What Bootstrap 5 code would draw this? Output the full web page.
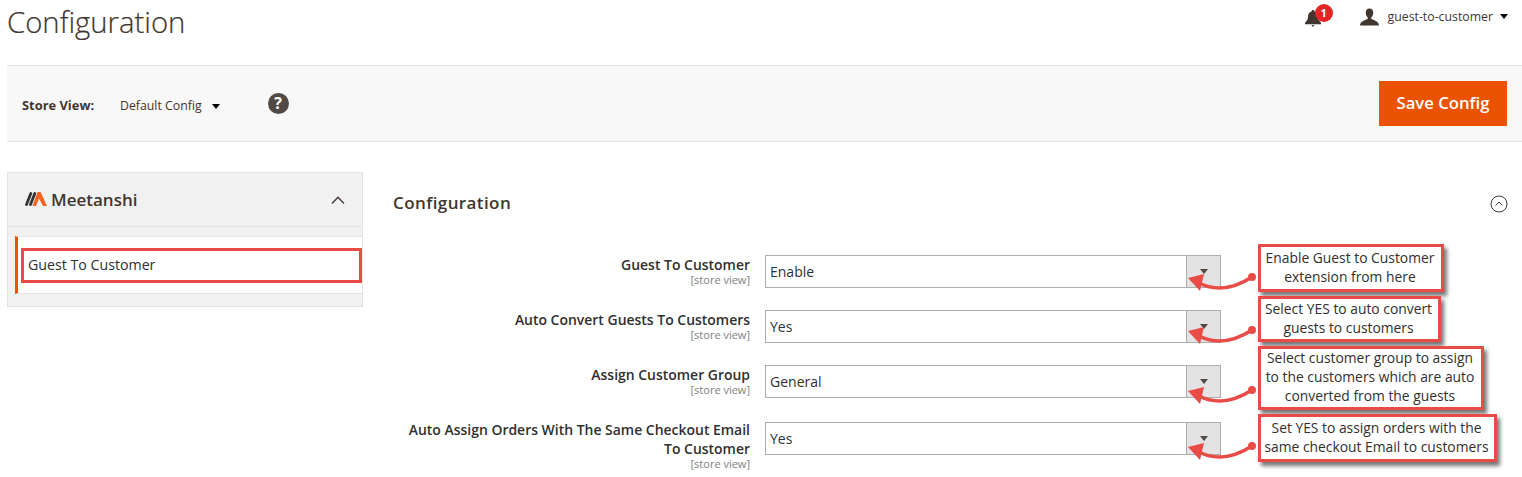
<!DOCTYPE html>
<html lang="en">
<head>
<meta charset="utf-8">
<title>Configuration</title>
<link href="https://cdn.jsdelivr.net/npm/bootstrap@5.3.0/dist/css/bootstrap.min.css" rel="stylesheet">
<style>
html,body{height:477px;overflow:hidden}
body{font-family:"Open Sans",sans-serif;color:#303030;font-size:14px;background:#fff;line-height:1.4}
.top-bar{height:65px;padding:0 14px 0 7px}
.page-name{font-size:29.3px;font-weight:300;color:#41362f;line-height:1;margin:8px 0 0;-webkit-text-stroke:.2px #41362f}
.bell-wrap{position:relative;width:20px;height:20px;margin:8px 35px 0 0}
.bell-count{position:absolute;left:10px;top:-4px;width:18px;height:18px;border-radius:50%;background:#e22626;color:#fff;font-size:11px;font-weight:700;line-height:18px;text-align:center}
.bell-shape{display:block;margin-top:2px}
.user-group{height:17px;margin-top:8px}
.user-name{font-size:12.3px;color:#41362f;margin:0 7px 0 9px}
.tri{display:inline-block;width:0;height:0;border-left:4px solid transparent;border-right:4px solid transparent;border-top:5px solid #000}
.tool-bar{height:77px;margin-left:7px;background:#f8f8f8;border-top:1px solid #e3e3e3;border-bottom:1px solid #e3e3e3;padding:0 15px}
.scope-row{margin-top:4px}
.scope-label{font-size:12.9px;font-weight:700;color:#41362f;width:98px}
.scope-val{font-size:12.3px;color:#41362f;margin:1px 10px 0 0}
.scope-tri{margin-top:3px}
.help-dot{width:21px;height:21px;border-radius:50%;background:#514943;color:#fff;font-size:16px;font-weight:700;line-height:21px;text-align:center;margin-left:48px;margin-top:-3px}
.save-btn{width:128px;height:45px;background:#eb5202;border:0;border-radius:0;color:#fff;font-size:16.7px;font-weight:600;padding:0;margin-top:-1px}
.save-btn:hover{background:#eb5202;color:#fff}
.work-area{position:relative;padding:30px 14px 0 7px}
.side-col{width:356px;flex:none}
.side-box{border:1px solid #e3e3e3;background:#f1f1f1}
.side-head{height:54px;border-bottom:1px solid #e3e3e3;padding:0 17px}
.brand-name{font-size:17px;font-weight:600;color:#41362f;margin-left:4px}
.side-item{margin:9px 0 12px 7px;height:58px;background:#fff;border-left:3px solid #eb5202;border-top:1px solid #e3e3e3;border-bottom:1px solid #e3e3e3;padding:11px 0 0 3px}
.item-mark{border:3px solid #e94b47;height:35px;padding:0 4px;line-height:28px;font-size:14.2px;font-weight:500;color:#303030}
.main-col{flex:1;padding-left:30px}
.sect-head{height:83px;padding:0 0 21px}
.sect-name{font-size:17px;font-weight:600;color:#41362f;letter-spacing:.4px;margin:0}
.sect-toggle{margin-top:2px}
.field-row{display:flex}
.field-label{width:357px;text-align:right;font-weight:600;font-size:13.96px;color:#303030;line-height:19px}
.label-raised{margin-top:-2px}
.field-note{display:block;font-size:11px;font-weight:400;color:#808080;line-height:12px}
.pick-wrap{width:456px;height:33px;margin-left:15px;display:flex;border:1px solid #adadad;background:#fff}
.pick-wrap select{flex:1;border:0;background:transparent;appearance:none;font:14px "Open Sans",sans-serif;color:#303030;padding:0 4px;outline:0}
.pick-arrow{width:34px;background:#e3e3e3;border-left:1px solid #adadad;display:flex;align-items:center;justify-content:center}
.pick-arrow i{width:0;height:0;border-left:4px solid transparent;border-right:4px solid transparent;border-top:5px solid #514943}
.note-box{position:absolute;left:1258px;background:#fff;border:3px solid #e94b47;box-shadow:3px 4px 4px #777;text-align:center;font-size:13.85px;line-height:19px;color:#303030;display:flex;align-items:center;justify-content:center;white-space:nowrap;padding:0 2px 2px 0}
.note-tall{padding-bottom:4px}
.pointer{position:absolute;left:1185px;width:75px;height:24px;overflow:visible}
</style>
</head>
<body>
<div class="top-bar d-flex justify-content-between">
  <h1 class="page-name">Configuration</h1>
  <div class="d-flex align-items-start">
    <div class="bell-wrap">
      <svg class="bell-shape" width="16" height="17" viewBox="0 0 16 18" preserveAspectRatio="none"><path fill="#41362f" d="M8 0c1 0 1.500.7 1.500 1.500C12 2.300 13 4.500 13 7c0 3 1 4.500 3 6.500V15H0v-1.500C2 11.500 3 10 3 7c0-2.500 1-4.700 3.500-5.500C6.500.7 7 0 8 0z"/><path fill="#41362f" d="M6.500 16h3L8 18z"/></svg>
      <span class="bell-count">1</span>
    </div>
    <div class="d-flex align-items-center user-group">
      <svg width="19" height="18" viewBox="0 0 19 17"><path fill="#41362f" d="M9.500 0c2.600 0 3.700 1.800 3.700 4.200 0 1.900-.8 3.600-1.900 4.800v1.600c1.800.9 7.700 2.100 7.700 6.400H0c0-4.300 5.900-5.500 7.700-6.400V9C6.600 7.800 5.800 6.100 5.800 4.200 5.800 1.800 6.900 0 9.500 0z"/></svg>
      <span class="user-name">guest-to-customer</span>
      <span class="tri"></span>
    </div>
  </div>
</div>
<div class="tool-bar d-flex align-items-center justify-content-between">
  <div class="d-flex align-items-center scope-row">
    <span class="scope-label">Store View:</span>
    <span class="scope-val">Default Config</span>
    <span class="tri scope-tri"></span>
    <span class="help-dot">?</span>
  </div>
  <button class="btn save-btn" type="button">Save Config</button>
</div>
<div class="work-area d-flex">
  <div class="side-col">
    <div class="side-box">
      <div class="side-head d-flex align-items-center justify-content-between">
        <div class="d-flex align-items-center">
          <svg width="22" height="14" viewBox="0 0 22 14"><path d="M1.500 12.500 5.800 1.500M5.500 12.500 9.800 1.500" fill="none" stroke="#333" stroke-width="2.800" stroke-linecap="round"/><path fill="#f26322" d="M7.500 14 12.500 0h3L22 14h-4l-4-7.500L11 14z"/></svg>
          <span class="brand-name">Meetanshi</span>
        </div>
        <svg width="14" height="8" viewBox="0 0 14 8"><path d="M1 7.500 7 1.200l6 6.300" fill="none" stroke="#41362f" stroke-width="1.300"/></svg>
      </div>
      <div class="side-item"><div class="item-mark">Guest To Customer</div></div>
    </div>
  </div>
  <div class="main-col">
    <div class="sect-head d-flex align-items-center justify-content-between">
      <h2 class="sect-name">Configuration</h2>
      <svg class="sect-toggle" width="18" height="18" viewBox="0 0 18 18"><circle cx="9" cy="9" r="8" fill="none" stroke="#41362f" stroke-width="1"/><path d="M5.500 10.500 9 7l3.500 3.500" fill="none" stroke="#41362f" stroke-width="1"/></svg>
    </div>
    <div class="field-row" style="margin-bottom:22px">
      <div class="field-label">Guest To Customer<span class="field-note">[store view]</span></div>
      <div class="pick-wrap"><select aria-label="Guest To Customer"><option>Enable</option></select><span class="pick-arrow"><i></i></span></div>
    </div>
    <div class="field-row" style="margin-bottom:22px">
      <div class="field-label">Auto Convert Guests To Customers<span class="field-note">[store view]</span></div>
      <div class="pick-wrap"><select aria-label="Auto Convert Guests To Customers"><option>Yes</option></select><span class="pick-arrow"><i></i></span></div>
    </div>
    <div class="field-row" style="margin-bottom:24px">
      <div class="field-label">Assign Customer Group<span class="field-note">[store view]</span></div>
      <div class="pick-wrap"><select aria-label="Assign Customer Group"><option>General</option></select><span class="pick-arrow"><i></i></span></div>
    </div>
    <div class="field-row">
      <div class="field-label label-raised">Auto Assign Orders With The Same Checkout Email To Customer<span class="field-note">[store view]</span></div>
      <div class="pick-wrap"><select aria-label="Auto Assign Orders"><option>Yes</option></select><span class="pick-arrow"><i></i></span></div>
    </div>
  </div>
</div>
<svg class="pointer" style="top:266px" viewBox="0 0 75 24"><path d="M3 12 19 8 15 25z" fill="#e94b47"/><path d="M14 17C30 25 47 24 67 11" fill="none" stroke="#e94b47" stroke-width="3.500"/><circle cx="67" cy="11" r="4" fill="#e94b47"/></svg>
<svg class="pointer" style="top:319px" viewBox="0 0 75 24"><path d="M3 12 19 8 15 25z" fill="#e94b47"/><path d="M14 17C30 25 47 24 67 11" fill="none" stroke="#e94b47" stroke-width="3.500"/><circle cx="67" cy="11" r="4" fill="#e94b47"/></svg>
<svg class="pointer" style="top:379px" viewBox="0 0 75 24"><path d="M3 12 19 8 15 25z" fill="#e94b47"/><path d="M14 17C30 25 47 24 67 11" fill="none" stroke="#e94b47" stroke-width="3.500"/><circle cx="67" cy="11" r="4" fill="#e94b47"/></svg>
<svg class="pointer" style="top:435px" viewBox="0 0 75 24"><path d="M3 12 19 8 15 25z" fill="#e94b47"/><path d="M14 17C30 25 47 24 67 11" fill="none" stroke="#e94b47" stroke-width="3.500"/><circle cx="67" cy="11" r="4" fill="#e94b47"/></svg>
<div class="note-box" style="top:244px;width:186px;height:48px">Enable Guest to Customer<br>extension from here</div>
<div class="note-box" style="top:296px;width:183px;height:46px">Select YES to auto convert<br>guests to customers</div>
<div class="note-box note-tall" style="top:346px;width:226px;height:64px">Select customer group to assign<br>to the customers which are auto<br>converted from the guests</div>
<div class="note-box" style="top:414px;width:239px;height:48px">Set YES to assign orders with the<br>same checkout Email to customers</div>
</body>
</html>
